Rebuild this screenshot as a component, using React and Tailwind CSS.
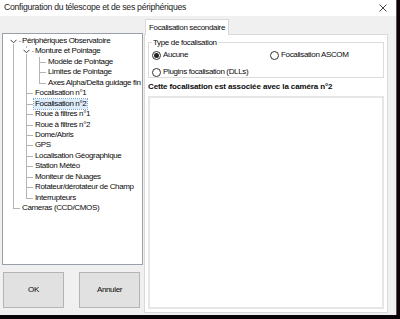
import React from "react";

const tree = [
  { label: "Périphériques Observatoire", level: 0, open: true, lines: [], last: false, first: true },
  { label: "Monture et Pointage", level: 1, open: true, lines: [0], last: false },
  { label: "Modèle de Pointage", level: 2, lines: [0, 1], last: false },
  { label: "Limites de Pointage", level: 2, lines: [0, 1], last: false },
  { label: "Axes Alpha/Delta guidage fin", level: 2, lines: [0, 1], last: true },
  { label: "Focalisation n°1", level: 1, lines: [0], last: false },
  { label: "Focalisation n°2", level: 1, lines: [0], last: false, selected: true },
  { label: "Roue à filtres n°1", level: 1, lines: [0], last: false },
  { label: "Roue à filtres n°2", level: 1, lines: [0], last: false },
  { label: "Dome/Abris", level: 1, lines: [0], last: false },
  { label: "GPS", level: 1, lines: [0], last: false },
  { label: "Localisation Géographique", level: 1, lines: [0], last: false },
  { label: "Station Météo", level: 1, lines: [0], last: false },
  { label: "Moniteur de Nuages", level: 1, lines: [0], last: false },
  { label: "Rotateur/dérotateur de Champ", level: 1, lines: [0], last: false },
  { label: "Interrupteurs", level: 1, lines: [0], last: true },
  { label: "Cameras (CCD/CMOS)", level: 0, lines: [], last: true },
];

const LINE_X = [10, 23, 36];

const Chevron = ({ x }) => (
  <svg
    className="absolute top-[3px]"
    style={{ left: x - 3 }}
    width="7"
    height="5"
    viewBox="0 0 7 5"
  >
    <path d="M0.5 0.8 L3.5 3.8 L6.5 0.8" fill="none" stroke="#404040" strokeWidth="1" />
  </svg>
);

const TreeRow = ({ item }) => {
  const x = LINE_X[item.level];
  return (
    <div className="relative h-[10.45px]">
      {item.lines.map((l) => (
        <div
          key={l}
          className="absolute top-0 bottom-0 w-px bg-[#b4b4b4]"
          style={{ left: LINE_X[l] }}
        />
      ))}
      {!item.open && (
        <>
          <div
            className="absolute w-px bg-[#b4b4b4]"
            style={{
              left: x,
              top: item.first ? "50%" : 0,
              height: item.last ? "50%" : "100%",
            }}
          />
          <div
            className="absolute h-px bg-[#b4b4b4] top-[5px]"
            style={{ left: x, width: 7 }}
          />
        </>
      )}
      {item.open && (
        <>
          {!item.first && (
            <div className="absolute w-px bg-[#b4b4b4] top-0 h-[2px]" style={{ left: x }} />
          )}
          <div
            className="absolute w-px bg-[#b4b4b4] top-[8px] bottom-0"
            style={{ left: x }}
          />
          <Chevron x={x} />
          <div className="absolute h-px bg-[#b4b4b4] top-[5px] w-[2px]" style={{ left: x + 6 }} />
        </>
      )}
      <span
        className={`absolute top-0 h-[10.45px] leading-[10px] whitespace-nowrap px-[1px] ${
          item.selected ? "bg-[#dcecfb] outline outline-1 outline-dotted outline-[#7aa7d8]" : ""
        }`}
        style={{ left: x + 8 }}
      >
        {item.label}
      </span>
    </div>
  );
};

const Radio = ({ checked, label }) => (
  <div className="flex items-center gap-[2px]">
    <div className="w-[9px] h-[9px] rounded-full border border-[#333] bg-white flex items-center justify-center">
      {checked && <div className="w-[5px] h-[5px] rounded-full bg-[#222]" />}
    </div>
    <span>{label}</span>
  </div>
);

export default function App() {
  return (
    <div
      className="w-[400px] h-[319px] bg-[#0a0508] overflow-hidden text-[8px] tracking-[-0.35px] text-[#0a0a0a]"
      style={{ fontFamily: '"Liberation Sans", Arial, sans-serif' }}
    >
      <div className="w-[397px] h-[315px] bg-[#f0f0f0] flex flex-col border-r border-[#6b4a55]">
        {/* title bar */}
        <div className="h-[16px] bg-white flex items-center justify-between pl-[4px] pr-[9px] shrink-0">
          <span className="text-[8.7px] tracking-[-0.28px] text-[#1a1a1a]">
            Configuration du télescope et de ses périphériques
          </span>
          <svg width="8" height="8" viewBox="0 0 8 8">
            <path d="M0.5 0.5 L7.5 7.5 M7.5 0.5 L0.5 7.5" stroke="#333" strokeWidth="0.9" />
          </svg>
        </div>

        <div className="flex flex-1 min-h-0">
          {/* left column */}
          <div className="w-[143px] pl-[2px] pt-[17px] flex flex-col shrink-0">
            <div className="h-[232px] bg-white border border-[#9aa0a8] pt-[2px] relative">
              {tree.map((item) => (
                <TreeRow key={item.label} item={item} />
              ))}
            </div>
            <div className="flex gap-[15px] mt-[7px] pl-[1px]">
              <button className="w-[61px] h-[36px] bg-[#e1e1e1] border border-[#b4b4b4] text-[8px]">
                OK
              </button>
              <button className="w-[61px] h-[36px] bg-[#e1e1e1] border border-[#b4b4b4] text-[8px]">
                Annuler
              </button>
            </div>
          </div>

          {/* right column */}
          <div className="flex-1 flex flex-col pt-[2px] pr-[8px] pb-[2px] pl-[1px]">
            <div className="flex">
              <div className="h-[16px] px-[3px] bg-white border border-b-0 border-[#d9d9d9] flex items-center ml-[1px] relative top-[1px]">
                Focalisation secondaire
              </div>
            </div>
            <div className="flex-1 bg-white border border-[#d9d9d9] px-[3px] pt-[7px] pb-[3px] flex flex-col">
              <div className="relative border border-[#dcdcdc] h-[36px]">
                <span className="absolute -top-[5px] left-[3px] bg-white px-[1px] leading-[9px]">
                  Type de focalisation
                </span>
                <div className="flex pt-[6px] pl-[3px]">
                  <div className="w-[118px]">
                    <Radio checked label="Aucune" />
                  </div>
                  <Radio label="Focalisation ASCOM" />
                </div>
                <div className="pl-[3px] mt-[5px]">
                  <Radio label="Plugins focalisation (DLLs)" />
                </div>
              </div>
              <div className="font-bold mt-[3px] leading-[12px] tracking-[-0.12px]">
                Cette focalisation est associée avec la caméra n°2
              </div>
              <div className="flex-1 mt-[3px] border-2 border-[#e6e6e6] bg-white" />
            </div>
          </div>
        </div>
      </div>
    </div>
  );
}
